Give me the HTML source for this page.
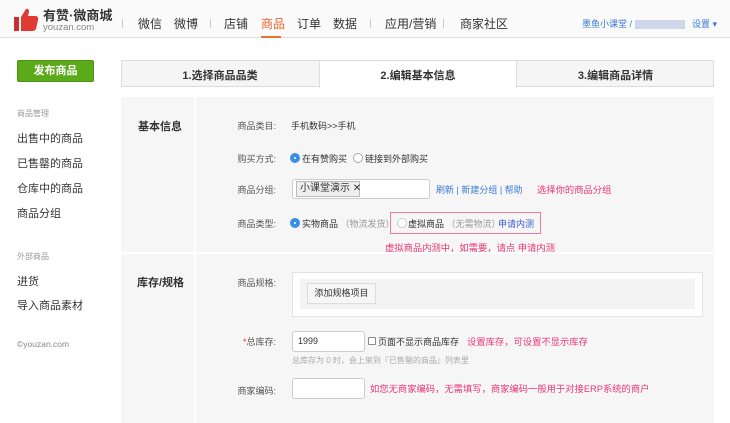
<!DOCTYPE html>
<html><head><meta charset="utf-8"><style>
*{margin:0;padding:0;box-sizing:border-box}
body{width:730px;height:423px;overflow:hidden;background:#fff;font-family:"Liberation Sans","Noto Sans CJK SC",sans-serif;font-size:12px;color:#333;position:relative}
.a{position:absolute;white-space:nowrap}
.hdr{position:absolute;left:0;top:0;width:730px;height:38px;background:#fafafa;border-bottom:1px solid #e0e0e0}
.nav{font-size:12px;color:#333;top:15px}
.sep{position:absolute;top:19px;width:1px;height:9px;background:#ccc}
.side{font-size:11px;color:#333}
.lbl{font-size:9px;color:#555;text-align:right;width:80px}
.red{color:#e8336e;font-size:9.3px;text-shadow:0 0 2px #fff}
.radio{position:absolute;width:10px;height:10px;border-radius:50%;border:1px solid #aaa;background:#fff}
.radio.on{background:#3a8ee6;border-color:#3a8ee6}
.radio.on::after{content:"";position:absolute;left:3px;top:3px;width:2px;height:2px;background:#fff;border-radius:50%}
.inp{position:absolute;background:#fff;border:1px solid #ccc;border-radius:3px}
</style></head><body>
<div class="hdr"></div>
<svg class="a" style="left:14px;top:8px" width="26" height="24" viewBox="0 0 26 24"><rect x="0" y="9" width="5" height="14" fill="#c9302c"/><path d="M7 9 L12 1 Q15 0 15 4 L14 8 L22 8 Q25 9 24 12 L22 21 Q21 23 18 23 L7 23 Z" fill="#e03b32"/></svg>
<div class="a" style="left:43px;top:5px;font-size:13px;font-weight:bold;color:#333">有赞·微商城</div>
<div class="a" style="left:43px;top:22px;font-size:9.5px;color:#888">youzan.com</div>
<div class="sep" style="left:122px"></div>
<div class="a nav" style="left:138px">微信</div>
<div class="a nav" style="left:174px">微博</div>
<div class="sep" style="left:210px"></div>
<div class="a nav" style="left:224px">店铺</div>
<div class="a nav" style="left:261px;color:#e8652a">商品</div>
<div class="a" style="left:261px;top:36px;width:20px;height:2px;background:#f07030"></div>
<div class="a nav" style="left:297px">订单</div>
<div class="a nav" style="left:333px">数据</div>
<div class="sep" style="left:370px"></div>
<div class="a nav" style="left:385px">应用/营销</div>
<div class="sep" style="left:443px"></div>
<div class="a nav" style="left:460px">商家社区</div>
<div class="a" style="left:582px;top:17px;font-size:9px;color:#3a7bd5">墨鱼小课堂 / <span style="display:inline-block;width:50px;height:9px;background:#cfd8ea;vertical-align:middle"></span> &nbsp; 设置 ▾</div>

<div class="a" style="left:17px;top:60px;width:77px;height:22px;background:#5aaa1a;border:1px solid #4c9412;border-radius:2px;color:#fff;font-weight:bold;font-size:11px;text-align:center;line-height:20px">发布商品</div>
<div class="a" style="left:121px;top:60px;width:593px;height:27px;background:#f5f5f5;border:1px solid #ddd"></div>
<div class="a" style="left:319px;top:60px;width:198px;height:28px;background:#fff;border-left:1px solid #ddd;border-right:1px solid #ddd;border-top:1px solid #ddd"></div>
<div class="a" style="left:121px;top:67px;width:198px;text-align:center;font-size:11px;font-weight:bold">1.选择商品品类</div>
<div class="a" style="left:319px;top:67px;width:198px;text-align:center;font-size:11px;font-weight:bold">2.编辑基本信息</div>
<div class="a" style="left:517px;top:67px;width:197px;text-align:center;font-size:11px;font-weight:bold">3.编辑商品详情</div>

<div class="a" style="left:17px;top:108px;font-size:8px;color:#999">商品管理</div>
<div class="a side" style="left:17px;top:130px">出售中的商品</div>
<div class="a side" style="left:17px;top:155px">已售罄的商品</div>
<div class="a side" style="left:17px;top:180px">仓库中的商品</div>
<div class="a side" style="left:17px;top:205px">商品分组</div>
<div class="a" style="left:17px;top:251px;font-size:8px;color:#999">外部商品</div>
<div class="a side" style="left:17px;top:273px">进货</div>
<div class="a side" style="left:17px;top:297px">导入商品素材</div>
<div class="a" style="left:17px;top:339px;font-size:8.5px;color:#888">©youzan.com</div>

<div class="a" style="left:121px;top:97px;width:593px;height:155px;background:#f6f6f6"></div>
<div class="a" style="left:121px;top:254px;width:593px;height:169px;background:#f6f6f6"></div>
<div class="a" style="left:194px;top:97px;width:2px;height:326px;background:#fff"></div>
<div class="a" style="left:138px;top:118px;font-size:11px;font-weight:bold">基本信息</div>
<div class="a" style="left:137px;top:274px;font-size:11px;font-weight:bold">库存/规格</div>

<div class="a lbl" style="left:196px;top:119px">商品类目:</div>
<div class="a" style="left:291px;top:119px;font-size:9px">手机数码&gt;&gt;手机</div>
<div class="a lbl" style="left:196px;top:152px">购买方式:</div>
<div class="radio on" style="left:290px;top:153px"></div>
<div class="a" style="left:302px;top:152px;font-size:9px">在有赞购买</div>
<div class="radio" style="left:353px;top:153px"></div>
<div class="a" style="left:365px;top:152px;font-size:9px">链接到外部购买</div>
<div class="a lbl" style="left:196px;top:183px">商品分组:</div>
<div class="inp" style="left:292px;top:179px;width:138px;height:20px"></div>
<div class="a" style="left:296px;top:181px;height:16px;width:64px;padding:0 3px;border:1px solid #bbb;background:#eee;font-size:10px;line-height:14px">小课堂演示 ✕</div>
<div class="a" style="left:436px;top:183px;font-size:9px;color:#3a7bd5">刷新 | 新建分组 | 帮助</div>
<div class="a red" style="left:537px;top:182px">选择你的商品分组</div>
<div class="a lbl" style="left:196px;top:217px">商品类型:</div>
<div class="radio on" style="left:290px;top:218px"></div>
<div class="a" style="left:302px;top:217px;font-size:9px">实物商品 <span style="color:#999">（物流发货）</span></div>
<div class="a" style="left:390px;top:212px;width:151px;height:22px;border:1px solid #f07aa0;background:#f6f6f6"></div>
<div class="radio" style="left:397px;top:218px;border-color:#ccc"></div>
<div class="a" style="left:408px;top:217px;font-size:9px">虚拟商品 <span style="color:#999">（无需物流）</span></div>
<div class="a" style="left:498px;top:217px;font-size:9px;color:#3a5bd5">申请内测</div>
<div class="a red" style="left:385px;top:240px">虚拟商品内测中，如需要，请点 申请内测</div>

<div class="a lbl" style="left:196px;top:276px">商品规格:</div>
<div class="a" style="left:292px;top:272px;width:411px;height:45px;background:#fff;border:1px solid #e3e3e3"></div>
<div class="a" style="left:300px;top:279px;width:395px;height:30px;background:#f3f3f3"></div>
<div class="a" style="left:307px;top:283px;width:69px;height:21px;background:#f6f6f6;border:1px solid #ddd;font-size:9px;text-align:center;line-height:19px">添加规格项目</div>
<div class="a lbl" style="left:196px;top:335px"><span style="color:#e33">*</span>总库存:</div>
<div class="inp" style="left:292px;top:331px;width:73px;height:21px"></div>
<div class="a" style="left:298px;top:336px;font-size:9px">1999</div>
<div class="a" style="left:368px;top:337px;width:8px;height:8px;border:1px solid #888;background:#fff;border-radius:1px"></div>
<div class="a" style="left:378px;top:335px;font-size:9px">页面不显示商品库存</div>
<div class="a red" style="left:467px;top:334px">设置库存，可设置不显示库存</div>
<div class="a" style="left:292px;top:355px;font-size:8px;color:#aaa">总库存为 0 时，会上架到『已售罄的商品』列表里</div>
<div class="a lbl" style="left:196px;top:384px">商家编码:</div>
<div class="inp" style="left:292px;top:378px;width:73px;height:21px"></div>
<div class="a red" style="left:370px;top:381px">如您无商家编码，无需填写，商家编码一般用于对接ERP系统的商户</div>
</body></html>
